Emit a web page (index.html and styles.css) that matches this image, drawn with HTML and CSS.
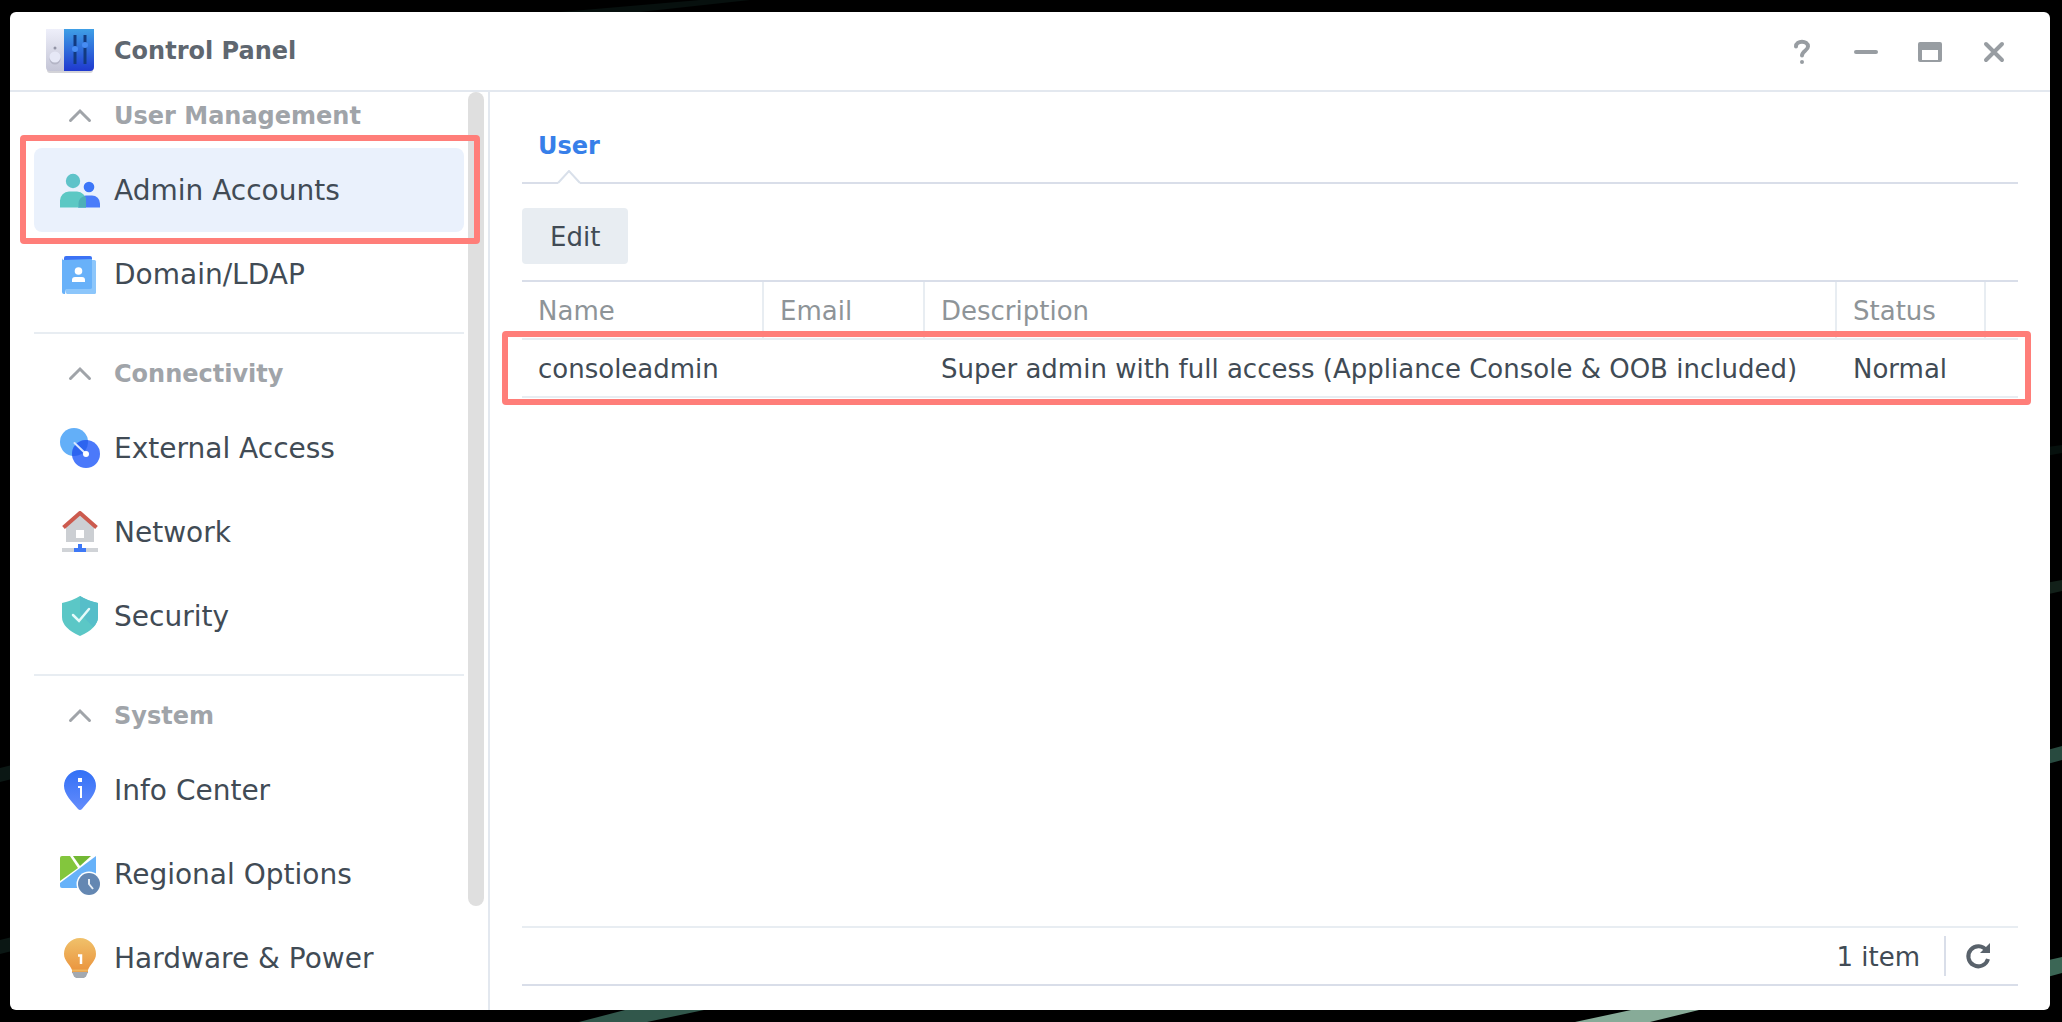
FILE: index.html
```html
<!DOCTYPE html>
<html lang="en">
<head>
  <meta charset="UTF-8">
  <meta name="viewport" content="width=device-width, initial-scale=1.0">
  <title>Control Panel</title>
  <link rel="stylesheet" href="styles.css">
</head>
<body>
  <!-- Desktop wallpaper -->
  <svg class="wallpaper" viewBox="0 0 2062 1022" preserveAspectRatio="none" aria-hidden="true">
    <path d="M0 768l12-3v14l-12 3zM0 940l12-3v14l-12 3z" fill="#0b1714"/>
    <path d="M560 12L700 0h50L640 12z" fill="#07100e"/>
    <path d="M2040 448l22-3v8l-22 4z" fill="#06100d"/>
    <path d="M2040 584l22-4v11l-22 5z" fill="#122019"/>
    <path d="M2040 752l22-6v14l-22 6z" fill="#284a3f"/>
    <path d="M2040 962l22-5v16l-22 6z" fill="#3b6655"/>
    <path d="M625 1010h79l-57 12h-68z" fill="#31574b"/>
    <path d="M1631 1010h68l-49 12h-75z" fill="#87ab98"/>
  </svg>

  <!-- Window -->
  <div class="window">
    <header class="titlebar">
      <svg class="app-icon" width="48" height="48" viewBox="0 0 48 48">
        <defs>
          <linearGradient id="panelBlue" x1="0" y1="0" x2="0" y2="1"><stop offset="0" stop-color="#3f9fe6"/><stop offset="1" stop-color="#1f38cf"/></linearGradient>
          <linearGradient id="panelGrey" x1="0" y1="0" x2="0" y2="1"><stop offset="0" stop-color="#eeeffa"/><stop offset="1" stop-color="#c4c5d6"/></linearGradient>
        </defs>
        <path d="M1 10h46v32a3 3 0 0 1-3 3H4a3 3 0 0 1-3-3z" fill="#d3d3d8"/>
        <path d="M0 1h18v42H4a4 4 0 0 1-4-4z" fill="url(#panelGrey)"/>
        <path d="M18 1h30v38a4 4 0 0 1-4 4H18z" fill="url(#panelBlue)"/>
        <circle cx="9" cy="31" r="5.500" fill="#b4b5c6"/>
        <circle cx="9" cy="29" r="5.500" fill="#e6e8f6"/>
        <circle cx="9" cy="20" r="1.500" fill="#9294a5"/>
        <path d="M29 7v29M39 7v29" stroke="#123a80" stroke-width="3"/>
        <circle cx="29" cy="21" r="3" fill="#478cf3"/>
        <circle cx="39" cy="17" r="3" fill="#478cf3"/>
      </svg>
      <h1>Control Panel</h1>
      <div class="window-tools">
        <button type="button" aria-label="Help">
          <svg width="32" height="32" viewBox="0 0 32 32"><path d="M10 10.500C10 4 22 4 22 10.500C22 14.500 16 15 16 19.500" fill="none" stroke="#989da2" stroke-width="4" stroke-linecap="round"/><circle cx="16" cy="26" r="2" fill="#989da2"/></svg>
        </button>
        <button type="button" aria-label="Minimize">
          <svg width="32" height="32" viewBox="0 0 32 32"><rect x="4" y="14" width="24" height="4" rx="2" fill="#989da2"/></svg>
        </button>
        <button type="button" aria-label="Maximize">
          <svg width="32" height="32" viewBox="0 0 32 32"><path fill-rule="evenodd" d="M6 6h20a2 2 0 0 1 2 2v16a2 2 0 0 1-2 2H6a2 2 0 0 1-2-2V8a2 2 0 0 1 2-2zM8 14v10h16V14z" fill="#989da2"/></svg>
        </button>
        <button type="button" aria-label="Close">
          <svg width="32" height="32" viewBox="0 0 32 32"><path d="M8 8l16 16M24 8L8 24" stroke="#989da2" stroke-width="4" stroke-linecap="round"/></svg>
        </button>
      </div>
    </header>

    <div class="window-body">
      <!-- Sidebar -->
      <aside class="sidebar">
        <nav>
          <section class="group">
            <h2><svg width="24" height="16" viewBox="0 0 24 16"><path d="M2.500 12.500L12 3l9.500 9.500"/></svg>User Management</h2>
            <a href="#admin" class="item active">
              <svg width="40" height="42" viewBox="0 0 40 42">
                <circle cx="29" cy="18" r="5.300" fill="#3c76f8"/>
                <path d="M18 38.500v-4a8 8 0 0 1 8-8h6a8 8 0 0 1 8 8v4z" fill="#4a7cfa"/>
                <circle cx="13" cy="12" r="7.200" fill="#5fc3c9"/>
                <path d="M0 38.500v-7a9 9 0 0 1 9-9h8a9 9 0 0 1 9 9v7z" fill="#5cc8c4"/>
                <path d="M18.500 38.500v-4a8 8 0 0 1 6.500-7.500q1 2 1 4.500v7z" fill="#4eafb7"/>
              </svg>
              Admin Accounts
            </a>
            <a href="#domain" class="item">
              <svg width="40" height="42" viewBox="0 0 40 42">
                <path d="M4 5a2 2 0 0 1 2-2h24a2 2 0 0 1 2 2v5H4z" fill="#3c72f5"/>
                <rect x="6" y="7" width="30" height="34" rx="1.500" fill="#8cc6fb"/>
                <path d="M2 5a2 2 0 0 0 2 2l28-1v29a2 2 0 0 1-2 1H6l-1 5H4a2 2 0 0 1-2-2z" fill="#68b1f9"/>
                <circle cx="18.500" cy="18" r="3.800" fill="#fff"/>
                <path d="M12 29v-2a3 3 0 0 1 3-3h7a3 3 0 0 1 3 3v2z" fill="#fff"/>
              </svg>
              Domain/LDAP
            </a>
          </section>

          <section class="group">
            <h2><svg width="24" height="16" viewBox="0 0 24 16"><path d="M2.500 12.500L12 3l9.500 9.500"/></svg>Connectivity</h2>
            <a href="#external" class="item">
              <svg width="40" height="42" viewBox="0 0 40 42">
                <circle cx="14" cy="15" r="14" fill="#63aff8"/>
                <circle cx="26" cy="27" r="14" fill="#4b79fa"/>
                <path d="M12.200 28.900A14 14 0 0 1 27.900 13.100A14 14 0 0 1 12.200 28.900z" fill="#2d64ef"/>
                <path d="M14.500 16L26 27" stroke="#d9e7fe" stroke-width="2" stroke-linecap="round"/>
                <circle cx="26" cy="27" r="3" fill="#fff"/>
              </svg>
              External Access
            </a>
            <a href="#network" class="item">
              <svg width="40" height="42" viewBox="0 0 40 42">
                <path d="M6 14L20 3l14 11v17H6z" fill="#cccfd3"/>
                <path d="M3.500 16.500L20 2l16.500 14.500" fill="none" stroke="#cc5a4e" stroke-width="4" stroke-linejoin="round"/>
                <rect x="16" y="19" width="8" height="8" fill="#fff"/>
                <path d="M2 37h36v4H2z" fill="#d0d3d7"/>
                <path d="M18 33h4v4h4v4H14v-4h4z" fill="#3d78f6"/>
              </svg>
              Network
            </a>
            <a href="#security" class="item">
              <svg width="40" height="42" viewBox="0 0 40 42">
                <path d="M20 1q8 5 18 7v14q0 11-18 19Q2 33 2 22V8q10-2 18-7z" fill="#5bc7c6"/>
                <path d="M20 1q8 5 18 7v14q0 5-5 10L20 18z" fill="#56bec9"/>
                <path d="M13 20l6 6L29 14" fill="none" stroke="#e5fafa" stroke-width="2.500" stroke-linecap="round"/>
              </svg>
              Security
            </a>
          </section>

          <section class="group">
            <h2><svg width="24" height="16" viewBox="0 0 24 16"><path d="M2.500 12.500L12 3l9.500 9.500"/></svg>System</h2>
            <a href="#info" class="item">
              <svg width="40" height="42" viewBox="0 0 40 42">
                <defs><linearGradient id="pin" x1="0" y1="0" x2="0" y2="1"><stop offset="0" stop-color="#3270f6"/><stop offset="1" stop-color="#648cfc"/></linearGradient></defs>
                <path d="M20 1a16 16 0 0 1 16 16c0 8-8 16-14 23q-2 2-4 0C12 33 4 25 4 17A16 16 0 0 1 20 1z" fill="url(#pin)"/>
                <path d="M18 9h4v4h-4z" fill="#fff"/>
                <path d="M18 18h3V29" fill="none" stroke="#fff" stroke-width="2"/>
              </svg>
              Info Center
            </a>
            <a href="#regional" class="item">
              <svg width="40" height="42" viewBox="0 0 40 42">
                <path d="M2 3h8l8 12L0 28V5a2 2 0 0 1 2-2z" fill="#83c63d"/>
                <path d="M13 3h18L20 13z" fill="#72b834"/>
                <path d="M36 3v30a2 2 0 0 1-2 2H2a2 2 0 0 1-2-2v-3z" fill="#67b2f9"/>
                <circle cx="29" cy="31" r="12.500" fill="#fff"/>
                <circle cx="29" cy="31" r="11" fill="#6487b2"/>
                <path d="M29 26v5l4 5" fill="none" stroke="#e6edf5" stroke-width="2"/>
              </svg>
              Regional Options
            </a>
            <a href="#hardware" class="item">
              <svg width="40" height="42" viewBox="0 0 40 42">
                <defs><linearGradient id="bulb" x1="0" y1="0" x2="0" y2="1"><stop offset="0" stop-color="#f0c16a"/><stop offset="1" stop-color="#ea923c"/></linearGradient></defs>
                <path d="M20 1a16 16 0 0 1 16 16c0 7-6 10-8 16v3H12v-3C10 27 4 24 4 17A16 16 0 0 1 20 1z" fill="url(#bulb)"/>
                <path d="M12 33.500h16" stroke="#eeb65f" stroke-width="2"/>
                <path d="M12 35h16l-2 4.500L24 41h-8l-2-1.500z" fill="#a3a9b0"/>
                <path d="M18 18.500h3V27" fill="none" stroke="#fff" stroke-width="2.500"/>
              </svg>
              Hardware &amp; Power
            </a>
          </section>
        </nav>
        <div class="scrollbar"></div>
      </aside>

      <!-- User list -->
      <main class="content">
        <div class="tabs">
          <a href="#user" class="tab">User
            <svg width="24" height="14" viewBox="0 0 24 14"><path d="M1 12h22v2H1z" fill="#fff"/><path d="M1 13L12 1l11 12" fill="#fff" stroke="#d9e0ea" stroke-width="2"/></svg>
          </a>
        </div>
        <div class="toolbar">
          <button type="button" class="edit-btn">Edit</button>
        </div>
        <div class="list marked">
          <table class="users">
            <colgroup>
              <col class="col-name">
              <col class="col-email">
              <col>
              <col class="col-status">
              <col class="col-end">
            </colgroup>
            <thead>
              <tr><th>Name</th><th>Email</th><th>Description</th><th>Status</th><td></td></tr>
            </thead>
            <tbody>
              <tr>
                <td>consoleadmin</td>
                <td></td>
                <td>Super admin with full access (Appliance Console &amp; OOB included)</td>
                <td>Normal</td>
                <td></td>
              </tr>
            </tbody>
          </table>
        </div>
        <footer class="paging">
          <span>1 item</span>
          <button type="button" class="refresh" aria-label="Refresh">
            <svg width="28" height="28" viewBox="0 0 28 28"><path d="M22.500 8.500A10 10 0 1 0 24 17" fill="none" stroke="#59626b" stroke-width="4"/><path d="M26 1v10H16z" fill="#59626b"/></svg>
          </button>
        </footer>
      </main>
    </div>
  </div>
</body>
</html>
```

FILE: styles.css
```css
:root {
  --text: #414b55;
  --muted: #8e9498;
  --group: #a0a4a9;
  --line: #e8edf2;
  --line-dark: #d9dee9;
  --accent: #377fe9;
  --mark: #ff7e79;
  --font-family: Verdana, "DejaVu Sans", sans-serif;
}
*, *::after {
  box-sizing: border-box;
  margin: 0;
  padding: 0;
}
body {
  height: 100vh;
  padding: 12px 12px 12px 10px;
  overflow: hidden;
  font-family: var(--font-family);
  font-size: 26px;
  color: var(--text);
  background: #000;
}
button {
  font: inherit;
  color: inherit;
  border: none;
  background: none;
  cursor: pointer;
}
a {
  color: inherit;
  text-decoration: none;
}
svg {
  display: block;
  flex: none;
}
.wallpaper {
  position: absolute;
  inset: 0;
  width: 100%;
  height: 100%;
  z-index: -1;
}
/* Window */
.window {
  display: flex;
  flex-direction: column;
  height: 100%;
  background: #fff;
  border-radius: 6px;
  overflow: hidden;
}
.titlebar {
  display: flex;
  align-items: center;
  flex: none;
  height: 80px;
  padding: 2px 40px 0 36px;
  border-bottom: 2px solid #e3e8ef;
}
.titlebar h1 {
  margin-left: 20px;
  padding-bottom: 2px;
  font-size: 24px;
  font-weight: 700;
  color: #5f6770;
}
.window-tools {
  display: flex;
  gap: 32px;
  margin-left: auto;
}
.window-body {
  display: flex;
  flex: 1;
  min-height: 0;
}
/* Sidebar */
.sidebar {
  display: flex;
  flex: none;
  gap: 4px;
  width: 480px;
  padding: 0 4px 0 24px;
  border-right: 2px solid #e3e8ef;
  overflow: hidden;
}
.sidebar nav {
  flex: 1;
  margin-top: -8px;
}
.group + .group {
  margin-top: 16px;
  padding-top: 8px;
  border-top: 2px solid var(--line);
}
.group h2 {
  display: flex;
  align-items: center;
  gap: 22px;
  height: 64px;
  padding-left: 34px;
  font-size: 24px;
  color: var(--group);
}
.group h2 svg {
  fill: none;
  stroke: var(--group);
  stroke-width: 3;
  stroke-linecap: round;
}
.item {
  position: relative;
  display: flex;
  align-items: center;
  gap: 14px;
  height: 84px;
  padding-left: 26px;
  border-radius: 8px;
  font-size: 28px;
}
.item.active {
  background: #eaf1fc;
}
.item.active::after,
.marked::after {
  content: "";
  position: absolute;
  border: 6px solid var(--mark);
  border-radius: 4px;
  z-index: 1;
}
.item.active::after {
  inset: -13px -16px -12px -14px;
}
.scrollbar {
  width: 16px;
  height: calc(100% - 104px);
  border-radius: 8px;
  background: #dfdfdf;
}
/* Content */
.content {
  display: flex;
  flex: 1;
  flex-direction: column;
  min-width: 0;
  padding: 16px 32px 24px;
}
.tabs {
  display: flex;
  height: 76px;
  border-bottom: 2px solid var(--line-dark);
}
.tab {
  position: relative;
  padding: 0 16px;
  font-size: 24px;
  font-weight: 700;
  line-height: 76px;
  color: var(--accent);
}
.tab svg {
  position: absolute;
  left: 50%;
  bottom: -2px;
  margin-left: -12px;
}
.toolbar {
  padding: 24px 0 16px;
}
.edit-btn {
  height: 56px;
  padding: 2px 28px 0;
  border-radius: 4px;
  background: #e8edf2;
}
.list {
  position: relative;
}
.users {
  width: 100%;
  table-layout: fixed;
  border-collapse: separate;
  border-spacing: 0;
  border-top: 2px solid var(--line-dark);
}
.col-name { width: 242px; }
.col-email { width: 161px; }
.col-status { width: 149px; }
.col-end { width: 32px; }
.users th,
.users td {
  height: 58px;
  padding: 2px 0 0 16px;
  border-bottom: 2px solid var(--line);
  text-align: left;
  white-space: nowrap;
}
.users th {
  font-weight: 400;
  color: var(--muted);
  border-right: 2px solid var(--line);
}
.users td:last-child {
  padding: 0;
}
/* Frame around the last row */
.marked::after {
  height: 74px;
  right: -13px;
  bottom: -7px;
  left: -20px;
}
.paging {
  display: flex;
  align-items: center;
  justify-content: flex-end;
  height: 60px;
  margin-top: auto;
  border-top: 2px solid var(--line);
  border-bottom: 2px solid var(--line-dark);
}
.paging span {
  padding-top: 2px;
}
.refresh {
  height: 40px;
  margin-left: 24px;
  padding: 0 26px 0 18px;
  border-left: 2px solid var(--line-dark);
}
```
